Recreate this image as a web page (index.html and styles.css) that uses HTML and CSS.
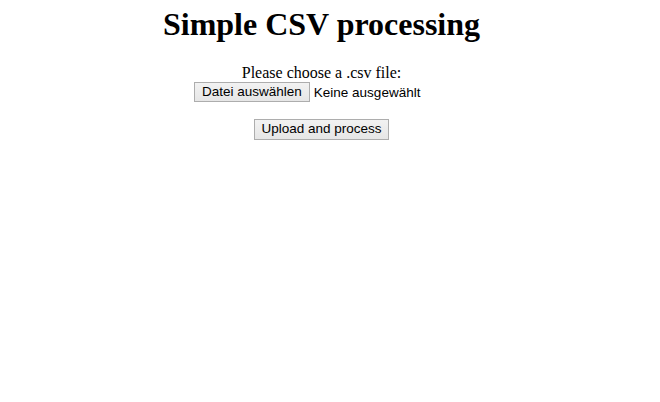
FILE: index.html
```html
<!DOCTYPE html>
<html>
<head>
<meta charset="utf-8">
<link rel="stylesheet" href="styles.css">
</head>
<body>
<div class="page">
  <h1 class="title">Simple CSV processing</h1>
  <form class="form">
    <div class="label">Please choose a .csv file:</div>
    <div class="file">
      <span class="btn">Datei auswählen</span>
      <span class="file-status">Keine ausgewählt</span>
    </div>
    <div class="submit-row">
      <span class="btn btn-submit">Upload and process</span>
    </div>
  </form>
</div>
</body>
</html>
```
FILE: styles.css
```css
html, body {
  margin: 0;
  padding: 0;
  background: #fff;
}
body {
  padding: 6px 8px 8px;
  font-family: "Liberation Serif", "Times New Roman", serif;
  font-size: 16px;
  color: #000;
}
.page {
  width: 627px;
  display: flex;
  flex-direction: column;
  align-items: center;
}
.title {
  margin: 0 0 21px 0;
  font-size: 32px;
  font-weight: bold;
  line-height: 37px;
}
.form {
  display: flex;
  flex-direction: column;
  align-items: center;
}
.label {
  line-height: 18px;
}
.file {
  width: 255px;
  display: flex;
  align-items: center;
  gap: 4px;
  font-family: "Liberation Sans", Arial, sans-serif;
  font-size: 13.5px;
}
.btn {
  display: inline-block;
  font-family: "Liberation Sans", Arial, sans-serif;
  font-size: 13.5px;
  line-height: 15px;
  padding: 1px 7px 2px;
  border: 1px solid #adadad;
  background: linear-gradient(#f2f2f2, #e6e6e6);
  color: #000;
}
.btn-submit {
  line-height: 16px;
  padding-left: 6.5px;
  padding-right: 6.5px;
}
.submit-row {
  margin-top: 17px;
}
```
